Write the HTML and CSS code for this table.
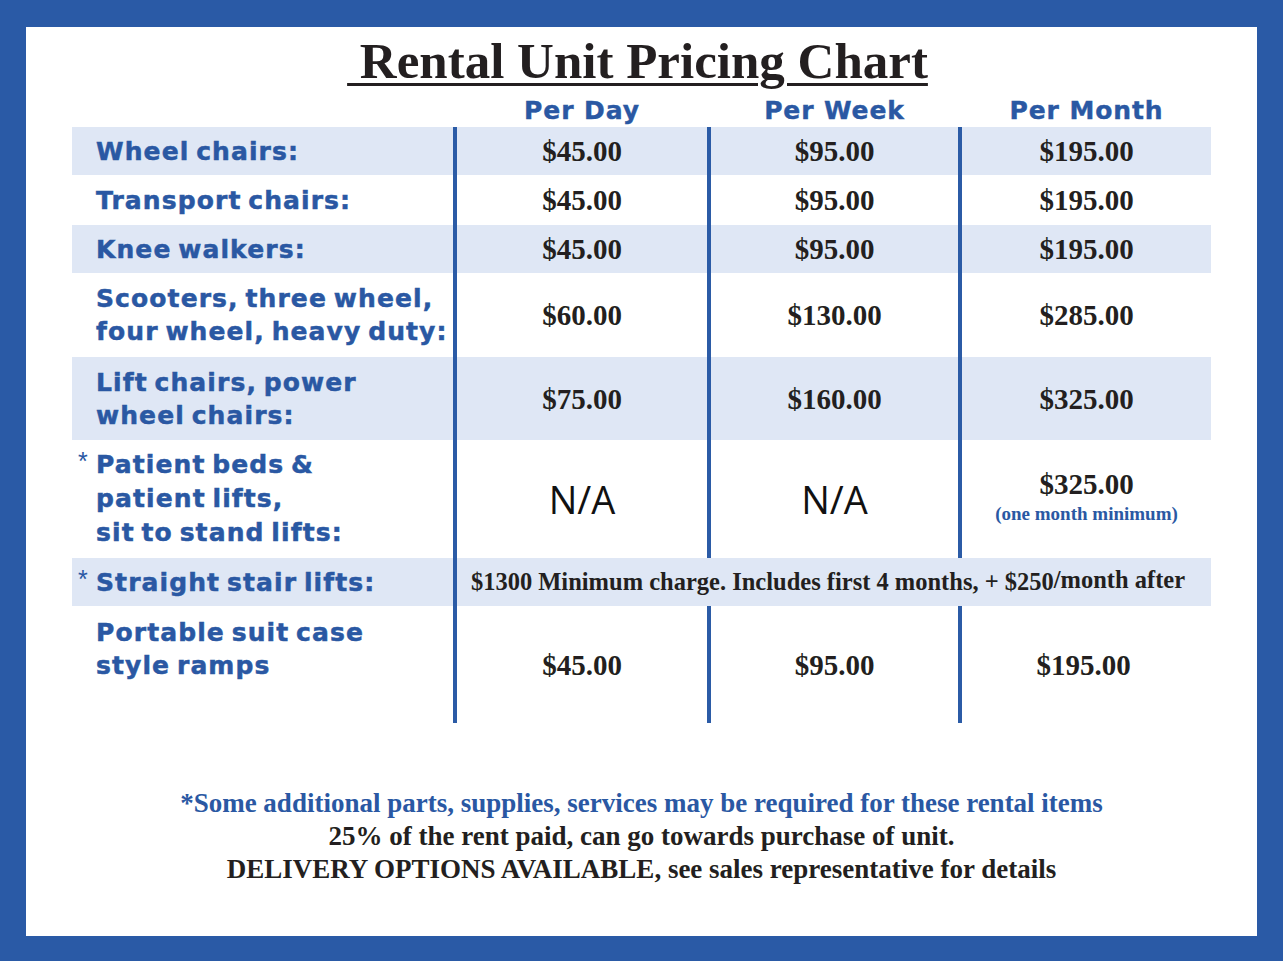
FILE: index.html
```html
<!DOCTYPE html>
<html lang="en">
<head>
<meta charset="utf-8">
<title>Rental Unit Pricing Chart</title>
<link rel="stylesheet" href="styles.css">
</head>
<body>
<div class="frame">
  <div class="sheet">
    <h1 class="title">&nbsp;Rental Unit Pricing Chart</h1>

    <div class="heads">
      <div></div>
      <div class="head">Per Day</div>
      <div class="head">Per Week</div>
      <div class="head">Per Month</div>
    </div>

    <div class="table">
      <div class="row shade r48">
        <div class="label"><div class="ltext">Wheel chairs:</div></div>
        <div class="cell"><span class="price">$45.00</span></div>
        <div class="cell"><span class="price">$95.00</span></div>
        <div class="cell"><span class="price">$195.00</span></div>
      </div>
      <div class="row r50">
        <div class="label"><div class="ltext">Transport chairs:</div></div>
        <div class="cell"><span class="price">$45.00</span></div>
        <div class="cell"><span class="price">$95.00</span></div>
        <div class="cell"><span class="price">$195.00</span></div>
      </div>
      <div class="row shade r48">
        <div class="label"><div class="ltext">Knee walkers:</div></div>
        <div class="cell"><span class="price">$45.00</span></div>
        <div class="cell"><span class="price">$95.00</span></div>
        <div class="cell"><span class="price">$195.00</span></div>
      </div>
      <div class="row r84">
        <div class="label"><div class="ltext">Scooters, three wheel,<br>four wheel, heavy duty:</div></div>
        <div class="cell"><span class="price">$60.00</span></div>
        <div class="cell"><span class="price">$130.00</span></div>
        <div class="cell"><span class="price">$285.00</span></div>
      </div>
      <div class="row shade r83">
        <div class="label"><div class="ltext">Lift chairs, power<br>wheel chairs:</div></div>
        <div class="cell"><span class="price">$75.00</span></div>
        <div class="cell"><span class="price">$160.00</span></div>
        <div class="cell"><span class="price">$325.00</span></div>
      </div>
      <div class="row r118">
        <div class="label"><div class="ltext marked tall"><span class="mark">*</span>Patient beds &amp;<br>patient lifts,<br>sit to stand lifts:</div></div>
        <div class="cell"><span class="na">N/A</span></div>
        <div class="cell"><span class="na">N/A</span></div>
        <div class="cell"><span class="price">$325.00</span><span class="note">(one month minimum)</span></div>
      </div>
      <div class="row shade r48">
        <div class="label"><div class="ltext marked"><span class="mark">*</span>Straight stair lifts:</div></div>
        <div class="cell span3"><span class="wide">$1300 Minimum charge. Includes first 4 months, + $250<span class="up">/month after</span></span></div>
      </div>
      <div class="row r117 top">
        <div class="label"><div class="ltext">Portable suit case<br>style ramps</div></div>
        <div class="cell"><span class="price">$45.00</span></div>
        <div class="cell"><span class="price">$95.00</span></div>
        <div class="cell"><span class="price shift">$195.00</span></div>
      </div>
    </div>

    <div class="foot">
      <p class="fline blue">*Some additional parts, supplies, services may be required for these rental items</p>
      <p class="fline">25% of the rent paid, can go towards purchase of unit.</p>
      <p class="fline">DELIVERY OPTIONS AVAILABLE, see sales representative for details</p>
    </div>
  </div>
</div>
</body>
</html>
```
FILE: styles.css
```css
* { box-sizing: border-box; margin: 0; padding: 0; }

body {
  margin: 0;
  background: #2a5aa6;
  font-family: "Liberation Sans", Arial, sans-serif;
}

.frame {
  width: 1283px;
  height: 961px;
  padding: 27px 26px 25px 26px;
  background: #2a5aa6;
}

.sheet {
  background: #ffffff;
  height: 909px;
  padding-top: 6px;
}

.title {
  text-align: center;
  padding-right: 8px;
  font: 700 51px/56px "Liberation Serif", "Times New Roman", serif;
  color: #231f20;
  text-decoration: underline;
  text-decoration-thickness: 3px;
  text-underline-offset: 5px;
}

.heads,
.row {
  display: grid;
  grid-template-columns: 381px 254px 251px 253px;
  width: 1139px;
  margin-left: 46px;
}

.heads {
  margin-top: 7px;
  height: 30px;
  margin-bottom: 1px;
}

.head {
  padding-left: 4px;
  text-align: center;
  color: #2a58a3;
  font: 700 25px/30px "DejaVu Sans", sans-serif;
  letter-spacing: 0.9px;
  -webkit-text-stroke: 0.4px #2a58a3;
}

.row.shade { background: #dfe7f5; }
.r48 { height: 48px; }
.r50 { height: 50px; }
.r84 { height: 84px; }
.r83 { height: 83px; }
.r118 { height: 118px; }
.r117 { height: 117px; }

.label {
  display: flex;
  align-items: center;
  padding-left: 24px;
  color: #2a58a3;
  white-space: nowrap;
  font: 700 25px/33px "DejaVu Sans", sans-serif;
  letter-spacing: 1.1px;
  word-spacing: -3px;
  -webkit-text-stroke: 0.5px #2a58a3;
}

.row.top .label {
  align-items: flex-start;
  padding-top: 10px;
}

.ltext.tall { line-height: 34px; }

.ltext.marked {
  margin-left: -18px;
  padding-left: 18px;
  text-indent: -18px;
}

.mark {
  display: inline-block;
  width: 18px;
  text-indent: 0;
  font: 400 25px/1 "Liberation Sans", Arial, sans-serif;
  letter-spacing: 0;
  -webkit-text-stroke: 0;
  vertical-align: 3px;
  text-align: left;
}

.cell {
  border-left: 4px solid #2b5ba6;
  display: flex;
  flex-direction: column;
  align-items: center;
  justify-content: center;
}

.span3 {
  grid-column: span 3;
  padding-right: 12px;
}

.price {
  font: 700 29px/30px "Liberation Serif", "Times New Roman", serif;
  color: #231f20;
}

.price.shift { margin-right: 6px; }

.note {
  font: 700 19px/30px "Liberation Serif", "Times New Roman", serif;
  color: #2a58a3;
}

.na {
  font: 400 38px/40px "Open Sans", sans-serif;
  color: #111111;
}

.wide {
  white-space: nowrap;
  font: 700 24.5px/30px "Liberation Serif", "Times New Roman", serif;
  color: #231f20;
}

.up {
  position: relative;
  top: -2px;
}

.foot {
  margin-top: 64px;
  text-align: center;
}

.fline {
  font: 700 27px/33px "Liberation Serif", "Times New Roman", serif;
  color: #231f20;
  white-space: nowrap;
}

.fline.blue { color: #2a58a3; }
```
